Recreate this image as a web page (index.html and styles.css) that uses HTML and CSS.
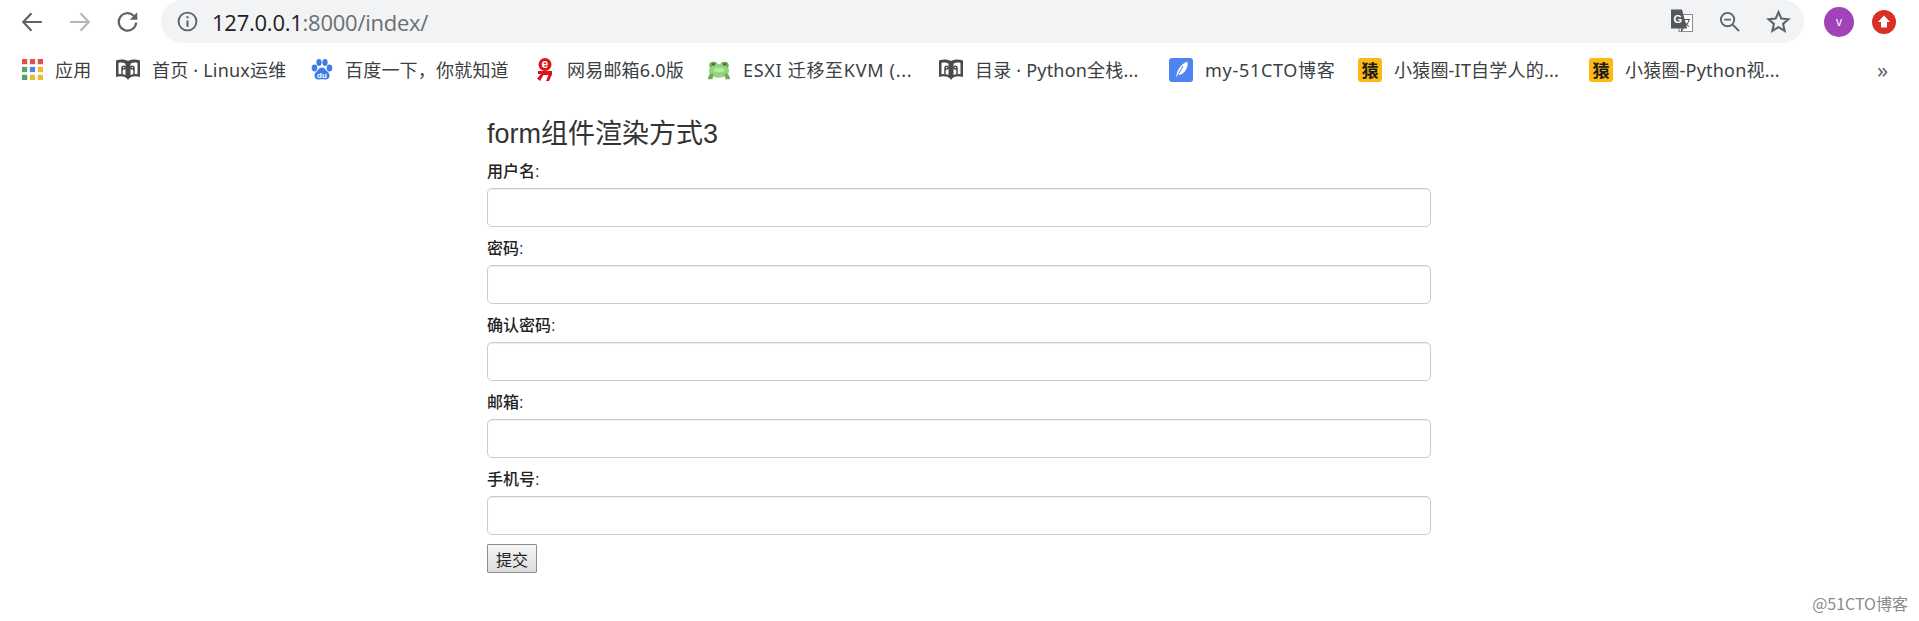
FILE: index.html
```html
<!DOCTYPE html>
<html lang="zh-CN">
<head>
<meta charset="utf-8">
<title>form组件渲染方式3</title>
<link rel="stylesheet" href="styles.css">
</head>
<body>
<svg class="defs" width="0" height="0" aria-hidden="true">
  <symbol id="book" viewBox="0 0 24 22">
    <path fill="#4a4a4a" d="M0 1.500C4 0 8.500 0 12 2c3.500-2 8-2 12-.5V18c-4-1.500-8.500-1-11 1.500L12 21l-1-1.500C8.500 17 4 16.500 0 18z"/>
    <path fill="#fff" d="M2.500 4c2.500-.8 5-.5 7 .7V16c-2-1-4.500-1.300-7-.8zM21.500 4c-2.500-.8-5-.5-7 .7V16c2-1 4.500-1.300 7-.8z"/>
    <path fill="none" stroke="#4a4a4a" stroke-width="1.500" d="M6 15V8.500a1.700 1.700 0 0 1 3.300 0c0 2-3.300 2-3.300 0M18 15V8.500a1.700 1.700 0 0 0-3.300 0c0 2 3.300 2 3.300 0"/>
  </symbol>
</svg>

<header class="toolbar">
  <svg class="nav-icon" viewBox="0 0 22 22"><path d="M20 11H3M10.500 3 3 11l7.500 8" fill="none" stroke="#5f6368" stroke-width="2"/></svg>
  <svg class="nav-icon" viewBox="0 0 22 22"><path d="M2 11h17M11.500 3 19 11l-7.500 8" fill="none" stroke="#b4b6b9" stroke-width="2"/></svg>
  <svg class="nav-icon nav-last" viewBox="0 0 22 22"><path d="M18.500 11.500a8 8 0 1 1-2.300-6.200L19 8" fill="none" stroke="#5f6368" stroke-width="2"/><path d="M19.500 2v7h-7z" fill="#5f6368"/></svg>
  <div class="omnibox">
    <svg class="info" viewBox="0 0 20 20"><circle cx="10" cy="10" r="8.500" fill="none" stroke="#5f6368" stroke-width="1.800"/><path d="M9 9h2v6H9zM9 5h2v2H9z" fill="#5f6368"/></svg>
    <span class="url"><span class="host">127.0.0.1</span>:8000/index/</span>
    <svg class="o-translate" viewBox="0 0 22 24"><rect x="8" y="5" width="13.500" height="17" fill="#fff" stroke="#8a8d90" stroke-width="1"/><path d="M0 0h11l5 19H0z" fill="#54585c"/><path d="M10 23l3-4h-3z" fill="#54585c"/><text class="tr-g" x="2.500" y="13">G</text><path d="M12 10h7m-1 0c-.5 3-2.500 6-5 7m1-4c1 1.500 2 3 4 4" fill="none" stroke="#54585c" stroke-width="1.100"/></svg>
    <svg class="o-zoom" viewBox="0 0 22 22"><circle cx="9" cy="9" r="7" fill="none" stroke="#5f6368" stroke-width="2"/><path d="M5.500 9h7M14 14l7 7" stroke="#5f6368" stroke-width="2"/></svg>
    <svg class="o-star" viewBox="0 0 24 24"><path d="m12 3 2.700 6.200 6.800.6-5.100 4.500 1.500 6.700L12 17.400 6.100 21l1.500-6.700-5.100-4.500 6.800-.6z" fill="none" stroke="#5f6368" stroke-width="2"/></svg>
  </div>
  <span class="avatar">v</span>
  <svg class="ext" viewBox="0 0 24 24"><circle cx="12" cy="12" r="12" fill="#d93025"/><path d="M12 5.500l6 6.500h-3v5.500H9V12H6z" fill="#fff"/></svg>
</header>

<nav class="bookmarks">
  <a class="bm"><svg class="ic ic-apps" viewBox="0 0 20 20"><g fill="#e0504a"><rect width="5" height="5"/><rect x="7.500" width="5" height="5"/><rect x="15" width="5" height="5"/></g><rect y="7.500" width="5" height="5" fill="#5aa469"/><rect x="7.500" y="7.500" width="5" height="5" fill="#4a86e8"/><rect x="15" y="7.500" width="5" height="5" fill="#f2b632"/><rect y="15" width="5" height="5" fill="#4fa36a"/><rect x="7.500" y="15" width="5" height="5" fill="#e9bd2f"/><rect x="15" y="15" width="5" height="5" fill="#f2b632"/></svg>应用</a>
  <a class="bm"><svg class="ic"><use href="#book"/></svg>首页 · Linux运维</a>
  <a class="bm"><svg class="ic ic-narrow" viewBox="0 0 22 24"><g fill="#3e7de8"><ellipse cx="3.500" cy="10" rx="2.800" ry="3.400"/><ellipse cx="8" cy="4.500" rx="2.600" ry="3.400"/><ellipse cx="14" cy="4.500" rx="2.600" ry="3.400"/><ellipse cx="18.500" cy="10" rx="2.800" ry="3.400"/><path d="M11 9.500c3 0 4 3 6 4.500 3 3 1.500 8-3 7.500-2-.3-4-.3-6 0-4.500.5-6-4.500-3-7.500 2-1.500 3-4.500 6-4.500z"/></g><text class="du" x="11" y="20">du</text></svg>百度一下，你就知道</a>
  <a class="bm"><svg class="ic ic-small" viewBox="0 0 20 24"><circle cx="10" cy="6.500" r="6.500" fill="#d9141b"/><text class="ne" x="10" y="10">e</text><path d="M3 13h14v3.500l-3 6.500h-3l2.500-6H8.500L5 23l-3-2.500L6 16H3z" fill="#d9141b"/></svg>网易邮箱6.0版</a>
  <a class="bm bm-wide"><svg class="ic" viewBox="0 0 26 24"><ellipse cx="7" cy="7" rx="4.500" ry="4" fill="#6fa85d"/><ellipse cx="19" cy="7" rx="4.500" ry="4" fill="#6fa85d"/><ellipse cx="13" cy="13" rx="11" ry="7.500" fill="#92d67a"/><path d="M1 22c.5-5 3-7 6-6l-1 6zM25 22c-.5-5-3-7-6-6l1 6z" fill="#6fa85d"/><ellipse cx="13" cy="12" rx="6" ry="2.500" fill="#b9e8a5"/><circle cx="7" cy="6" r="1.300" fill="#3b5c32"/><circle cx="19" cy="6" r="1.300" fill="#3b5c32"/></svg>ESXI 迁移至KVM (...</a>
  <a class="bm"><svg class="ic"><use href="#book"/></svg>目录 · Python全栈...</a>
  <a class="bm bm-wide"><svg class="ic" viewBox="0 0 24 24"><rect width="24" height="24" rx="3" fill="#4d84f1"/><path d="M7 20.500C7.500 13 11 6.500 18.500 3.500c1 6.500-3 13-9.500 13.800z" fill="#fff"/><path d="M7 20.500 14 8" stroke="#4d84f1" fill="none"/></svg>my-51CTO博客</a>
  <a class="bm"><span class="yuan">猿</span>小猿圈-IT自学人的...</a>
  <a class="bm"><span class="yuan">猿</span>小猿圈-Python视...</a>
  <span class="more">»</span>
</nav>

<main class="page">
  <h3 class="title">form组件渲染方式3</h3>
  <form class="form">
    <div class="field"><label class="label" for="f1">用户名:</label><input class="input" id="f1" type="text"></div>
    <div class="field"><label class="label" for="f2">密码:</label><input class="input" id="f2" type="password"></div>
    <div class="field"><label class="label" for="f3">确认密码:</label><input class="input" id="f3" type="password"></div>
    <div class="field"><label class="label" for="f4">邮箱:</label><input class="input" id="f4" type="text"></div>
    <div class="field field-last"><label class="label" for="f5">手机号:</label><input class="input" id="f5" type="text"></div>
    <button class="submit" type="button">提交</button>
  </form>
</main>

<div class="watermark">@51CTO博客</div>
</body>
</html>
```

FILE: styles.css
```css
* { box-sizing: border-box; }
html, body { margin: 0; height: 100%; overflow: hidden; }
body {
  position: relative;
  background: #fff;
  font-family: "Noto Sans CJK SC", "Noto Sans", sans-serif;
  color: #333;
}
.defs { position: absolute; }

.toolbar {
  height: 43px;
  display: flex;
  align-items: center;
  padding-left: 20px;
}
.nav-icon { width: 24px; height: 24px; margin-right: 24px; flex: none; }
.nav-last { margin-right: 21px; }
.omnibox {
  width: 1643px;
  height: 43px;
  flex: none;
  background: #f1f3f4;
  border-radius: 22px;
  display: flex;
  align-items: center;
  padding-left: 16px;
}
.info { width: 21px; height: 21px; margin-right: 14px; }
.url { font: 22px/1 "Open Sans", sans-serif; color: #6b6e72; letter-spacing: -0.250px; }
.host { color: #202124; }
.o-translate { width: 22px; height: 25px; margin-left: auto; }
.tr-g { font: 700 11px "Liberation Sans", sans-serif; fill: #fff; }
.o-zoom { width: 21px; height: 21px; margin-left: 26px; }
.o-star { width: 25px; height: 25px; margin-left: 26px; margin-right: 13px; }
.avatar {
  width: 30px;
  height: 30px;
  margin-left: 20px;
  border-radius: 50%;
  background: #a142b8;
  color: #fff;
  font: 12px/30px "Noto Sans", sans-serif;
  text-align: center;
  flex: none;
}
.ext { width: 24px; height: 24px; margin-left: 18px; flex: none; }

.bookmarks {
  height: 53px;
  display: grid;
  grid-template-columns: 94px 195px 224px 172px 232px 230px 189px 231px auto;
  align-items: center;
  padding-left: 22px;
  font: 18px/24px "Noto Sans", "Noto Sans CJK SC", sans-serif;
  letter-spacing: 0.200px;
  color: #3c4043;
  white-space: nowrap;
}
.bm { display: flex; align-items: center; }
.bm-wide { letter-spacing: 0.700px; }
.ic { width: 24px; height: 24px; margin-right: 12px; flex: none; }
.ic-apps { width: 21px; height: 21px; }
.ic-narrow { width: 22px; }
.ic-small { width: 20px; }
.du { font: 700 8px "Liberation Sans", sans-serif; fill: #fff; text-anchor: middle; }
.ne { font: 700 12px "Liberation Sans", sans-serif; fill: #fff; text-anchor: middle; }
.yuan {
  width: 24px;
  height: 24px;
  margin-right: 12px;
  background: #fdb813;
  border-radius: 3px;
  color: #1c1c1c;
  font: 700 17px/24px "Noto Sans CJK SC", sans-serif;
  text-align: center;
  flex: none;
}
.more { position: absolute; left: 1877px; top: 54px; font-size: 22px; line-height: 30px; color: #5f6368; }

.page { width: 944px; margin-left: 487px; padding-top: 21px; }
.title {
  margin: 0 0 11px;
  font: 400 27px/34px "Liberation Sans", "Noto Sans CJK SC", sans-serif;
  color: #333;
}
.field { height: 77px; display: flex; flex-direction: column; }
.field-last { height: 74px; }
.label {
  font: 500 16px/20px "Liberation Sans", "Noto Sans CJK SC", sans-serif;
  height: 26px;
  color: #222;
}
.input {
  width: 100%;
  height: 39px;
  border: 1px solid #ccc;
  border-radius: 5px;
  background: #fff;
  box-shadow: inset 0 1px 1px rgba(0,0,0,.075);
}
.submit {
  width: 50px;
  height: 29px;
  padding: 0;
  border: 1px solid #8e8e8e;
  border-radius: 1px;
  background: linear-gradient(#f6f6f6, #dcdcdc);
  font: 16px/1 "Noto Sans CJK SC", sans-serif;
  color: #222;
}
.watermark {
  position: absolute;
  right: 11px;
  bottom: 9px;
  font-size: 16px;
  line-height: 18px;
  color: #8a8a8a;
}
```
